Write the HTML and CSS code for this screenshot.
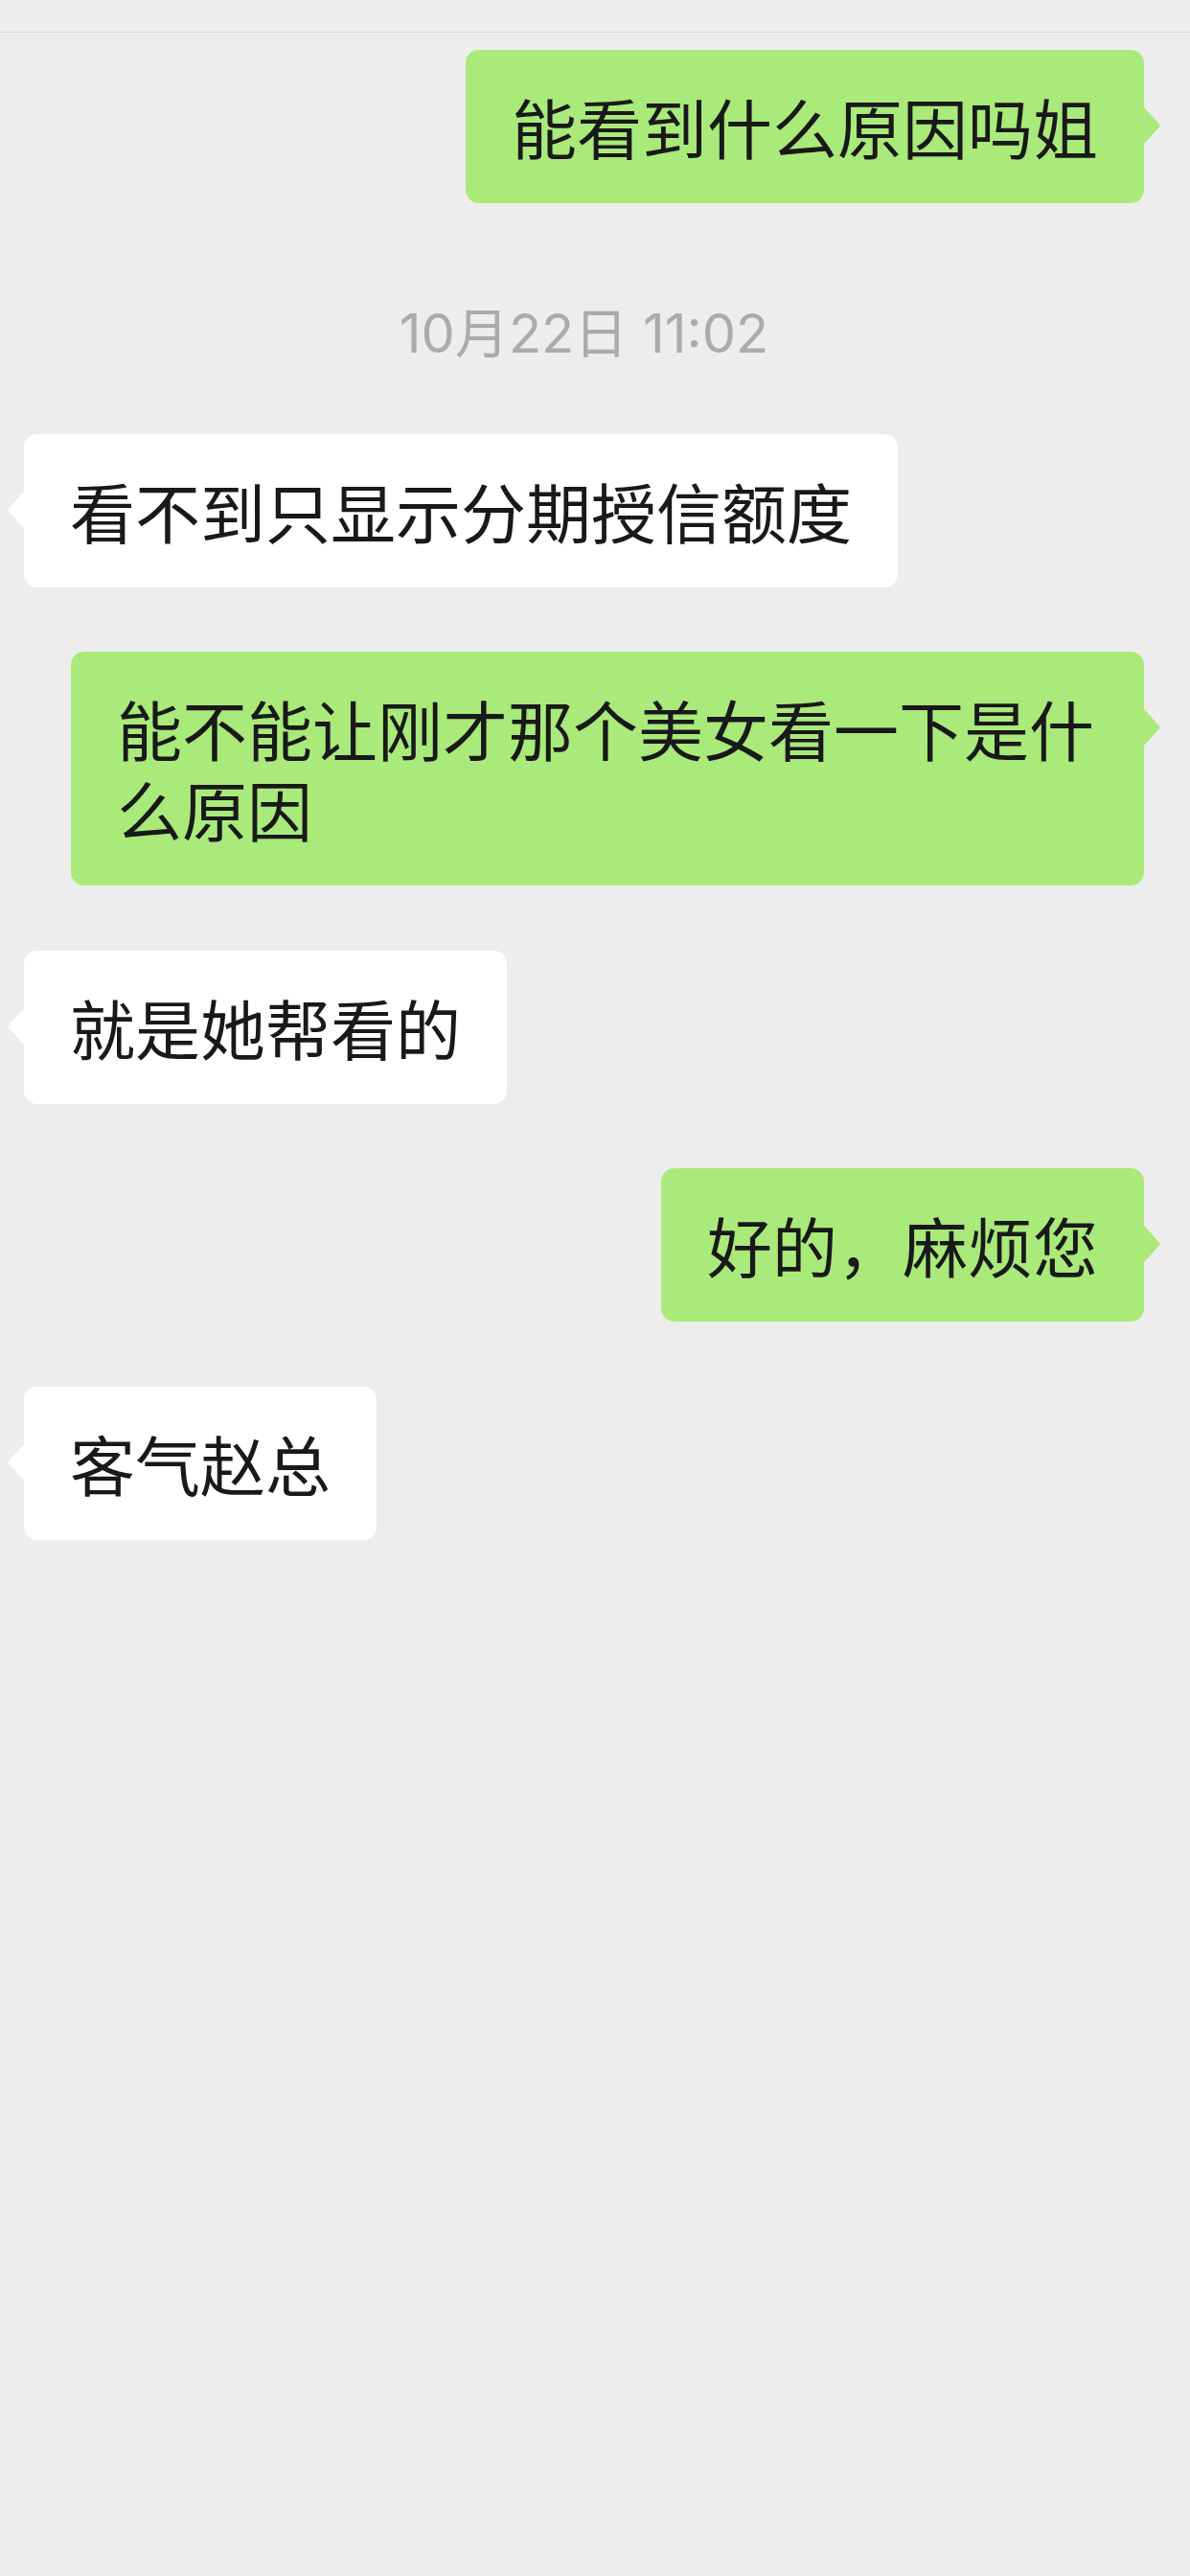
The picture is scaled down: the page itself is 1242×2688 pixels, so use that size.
FILE: index.html
```html
<!DOCTYPE html>
<html lang="zh-CN">
<head>
  <meta charset="UTF-8" />
  <meta name="viewport" content="width=device-width, initial-scale=1.0" />
  <title>聊天</title>
  <link rel="stylesheet" href="styles.css">
</head>
<body>
  <!-- top bar edge (title bar cropped off) -->
  <div class="topbar"></div>

  <!-- Message list -->
  <main class="chat">
    <div class="msg me">
      <div class="bubble">能看到什么原因吗姐
        <svg class="tail" viewBox="0 0 20 40"><path d="M0 0 Q3 3 16 17.5 Q19 20 16 22.5 Q3 37 0 40 Z" /></svg>
      </div>
    </div>

    <div class="time">10月22日 11:02</div>

    <div class="msg them">
      <div class="bubble">看不到只显示分期授信额度
        <svg class="tail" viewBox="0 0 20 40"><path d="M20 0 Q17 3 4 17.5 Q1 20 4 22.5 Q17 37 20 40 Z" /></svg>
      </div>
    </div>

    <div class="msg me">
      <div class="bubble">能不能让刚才那个美女看一下是什么原因
        <svg class="tail" viewBox="0 0 20 40"><path d="M0 0 Q3 3 16 17.5 Q19 20 16 22.5 Q3 37 0 40 Z" /></svg>
      </div>
    </div>

    <div class="msg them">
      <div class="bubble">就是她帮看的
        <svg class="tail" viewBox="0 0 20 40"><path d="M20 0 Q17 3 4 17.5 Q1 20 4 22.5 Q17 37 20 40 Z" /></svg>
      </div>
    </div>

    <div class="msg me">
      <div class="bubble">好的，麻烦您
        <svg class="tail" viewBox="0 0 20 40"><path d="M0 0 Q3 3 16 17.5 Q19 20 16 22.5 Q3 37 0 40 Z" /></svg>
      </div>
    </div>

    <div class="msg them">
      <div class="bubble">客气赵总
        <svg class="tail" viewBox="0 0 20 40"><path d="M20 0 Q17 3 4 17.5 Q1 20 4 22.5 Q17 37 20 40 Z" /></svg>
      </div>
    </div>
  </main>
</body>
</html>
```

FILE: styles.css
```css
/* Base styling */
body {
  margin: 0;
  min-height: 2688px;
  background-color: #ededed;
  font-family: "Noto Sans CJK SC", "Noto Sans", sans-serif;
  color: #191919;
}
/* Thin edge of the header bar */
.topbar {
  height: 33px;
  border-bottom: 1px solid #d6d6d6;
}
/* Message list */
.chat {
  display: flex;
  flex-direction: column;
  gap: 67.5px;
  padding: 18px 48px 0 25px;
}
.msg {
  display: flex;
}
.msg.me {
  justify-content: flex-end;
}
.msg.them {
  justify-content: flex-start;
}
/* Bubbles */
.bubble {
  position: relative;
  box-sizing: border-box;
  max-width: 1120px;
  padding: 38px 48px;
  border-radius: 14px;
  font-size: 68px;
  line-height: 84px;
  background-color: #fff;
}
.me .bubble {
  background-color: #a9ea7a;
}
/* Little arrow on the side of a bubble */
.tail {
  position: absolute;
  top: 59px;
  width: 20px;
  height: 40px;
}
.me .tail {
  right: -19px;
  fill: #a9ea7a;
}
.them .tail {
  left: -19px;
  fill: #fff;
}
/* Timestamp divider */
.time {
  padding: 38px 0 7.5px;
  font-family: "Inter", "Noto Sans CJK SC", sans-serif;
  font-size: 56px;
  line-height: 60px;
  color: #ababab;
  text-align: center;
}
```
